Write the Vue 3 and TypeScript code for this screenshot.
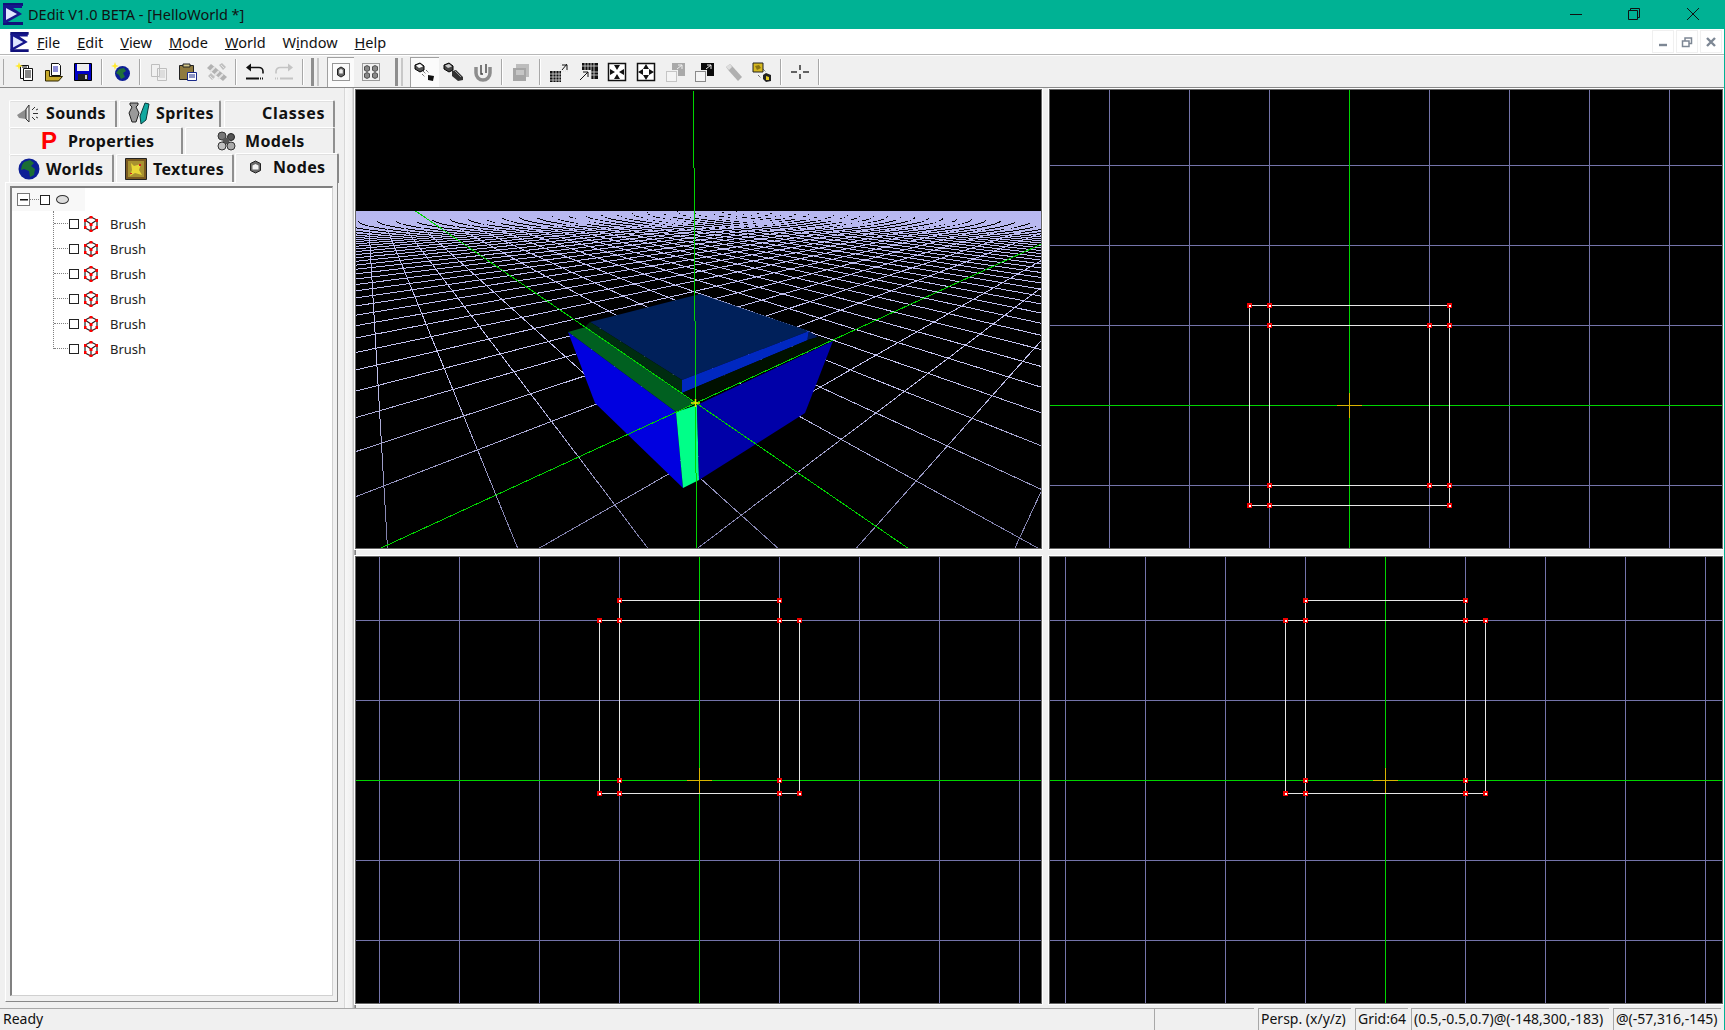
<script setup lang="ts">
interface Pt { x: number, y: number }

// floor grid of the perspective view, fitted from the vanishing points
const VP1: Pt = { x: 366, y: 177 };
const VP2: Pt = { x: 1187, y: 177 };
const ORIGIN: Pt = { x: 696, y: 403 };
const ALPHA = 0.1176;
const BETA = 0.0965;
const W_NEAR = 0.45;
const W_FAR = 6.65;

const project = (a: number, b: number): Pt => {
	const w = a + b + 1;
	return {
		x: (a * VP1.x + b * VP2.x + ORIGIN.x) / w,
		y: (a * VP1.y + b * VP2.y + ORIGIN.y) / w,
	};
};

const segU = (u: number) => {
	const a = u * ALPHA;
	const p = project(a, W_NEAR - 1 - a);
	const q = project(a, W_FAR - 1 - a);
	return `M${p.x.toFixed(1)} ${p.y.toFixed(1)}L${q.x.toFixed(1)} ${q.y.toFixed(1)}`;
};

const segV = (v: number) => {
	const b = v * BETA;
	const p = project(W_NEAR - 1 - b, b);
	const q = project(W_FAR - 1 - b, b);
	return `M${p.x.toFixed(1)} ${p.y.toFixed(1)}L${q.x.toFixed(1)} ${q.y.toFixed(1)}`;
};

let floor = '';
for (let i = -12; i <= 70; i++) {
	if (i === 0) continue;
	floor += segU(i) + segV(i);
}
const floorPath = floor;
const axisPath = segU(0) + segV(0);

// ortho views
interface Ortho {
	key: string,
	view: string,
	x0: number, x1: number, y0: number, y1: number,
	vLines: number[],
	hLines: number[],
	cx: number, cy: number,
	segs: number[][],
	verts: number[][],
}

const stepped = (from: number, to: number, skip: number) => {
	const out: number[] = [];
	for (let i = from; i <= to; i += 80) if (i !== skip) out.push(i);
	return out;
};

const frontBrush = (l: number) => {
	const a = l, b = l + 20, c = l + 180, d = l + 200;
	return {
		segs: [
			[b, 600, c, 600], [a, 620, d, 620], [a, 793, d, 793],
			[a, 620, a, 793], [d, 620, d, 793], [b, 600, b, 793], [c, 600, c, 793],
		],
		verts: [
			[b, 600], [c, 600], [a, 620], [b, 620], [c, 620], [d, 620],
			[b, 780], [c, 780], [a, 793], [b, 793], [c, 793], [d, 793],
		],
	};
};

const ortho: Ortho[] = [
	{
		key: 'top', view: '1050 90 672 458', x0: 1050, x1: 1722, y0: 90, y1: 548,
		vLines: stepped(1109, 1669, 1349), hLines: [165, 245, 325, 485], cx: 1349, cy: 405,
		segs: [
			[1249, 305, 1449, 305], [1269, 325, 1449, 325], [1269, 485, 1449, 485], [1249, 505, 1449, 505],
			[1249, 305, 1249, 505], [1269, 305, 1269, 505], [1429, 325, 1429, 485], [1449, 305, 1449, 505],
		],
		verts: [
			[1249, 305], [1269, 305], [1449, 305], [1269, 325], [1429, 325], [1449, 325],
			[1269, 485], [1429, 485], [1449, 485], [1249, 505], [1269, 505], [1449, 505],
		],
	},
	{
		key: 'left', view: '356 557 685 446', x0: 356, x1: 1041, y0: 557, y1: 1003,
		vLines: stepped(379, 1019, 699), hLines: [620, 700, 860, 940], cx: 699, cy: 780,
		...frontBrush(599),
	},
	{
		key: 'right', view: '1050 557 672 446', x0: 1050, x1: 1722, y0: 557, y1: 1003,
		vLines: stepped(1065, 1705, 1385), hLines: [620, 700, 860, 940], cx: 1385, cy: 780,
		...frontBrush(1285),
	},
];

const brushRows = [0, 1, 2, 3, 4, 5];
</script>

<template>
	<div class="window">
		<div class="titlebar">
			<svg class="logo" width="22" height="24" viewBox="0 0 22 24">
				<path d="M1 1h20v3H1zM1 20h20v3H1z" fill="#10107a" />
				<path d="M1 3h19v3h-9l9 6-16 9H1z" fill="#16168c" />
				<path d="M4 6l11 6-11 6z" fill="#dfe6ff" />
			</svg>
			<span class="title-text">DEdit V1.0 BETA - [HelloWorld *]</span>
			<div class="caption">
				<svg width="14" height="14" viewBox="0 0 14 14" class="cap-min"><path d="M1 7.500h12" stroke="#111" fill="none" /></svg>
				<svg width="14" height="14" viewBox="0 0 14 14" class="cap-max"><path d="M1.500 3.500h9v9h-9zM3.500 3.500v-2h9v9h-2" stroke="#111" fill="none" /></svg>
				<svg width="14" height="14" viewBox="0 0 14 14" class="cap-close"><path d="M1 1l12 12M13 1L1 13" stroke="#111" fill="none" /></svg>
			</div>
		</div>

		<div class="menubar">
			<svg class="menu-logo" width="21" height="22" viewBox="0 0 22 24">
				<path d="M1 1h20v3H1zM1 20h20v3H1z" fill="#10107a" />
				<path d="M1 3h19v3h-9l9 6-16 9H1z" fill="#16168c" />
				<path d="M4 6l11 6-11 6z" fill="#dfe6ff" />
			</svg>
			<span class="menu-item"><u>F</u>ile</span>
			<span class="menu-item"><u>E</u>dit</span>
			<span class="menu-item"><u>V</u>iew</span>
			<span class="menu-item"><u>M</u>ode</span>
			<span class="menu-item"><u>W</u>orld</span>
			<span class="menu-item">W<u>i</u>ndow</span>
			<span class="menu-item"><u>H</u>elp</span>
			<div class="mdi">
				<span class="mdi-btn"><svg width="12" height="12" viewBox="0 0 12 12"><path d="M2 9h8" stroke="#7d8794" stroke-width="2.400" /></svg></span>
				<span class="mdi-btn"><svg width="12" height="12" viewBox="0 0 12 12"><path d="M1.500 5h6.500v5.500H1.500zM4 5V2h6.500v5.500H8" stroke="#7d8794" stroke-width="1.500" fill="none" /></svg></span>
				<span class="mdi-btn"><svg width="12" height="12" viewBox="0 0 12 12"><path d="M2 2l8 8M10 2l-8 8" stroke="#7d8794" stroke-width="2.400" /></svg></span>
			</div>
		</div>

		<div class="toolbar">
			<span class="grip-thin"></span>
			<span class="tb">
				<svg width="20" height="20" viewBox="0 0 20 20">
					<path d="M5.500 3.500h8v13h-8z" fill="#fff" stroke="#111" />
					<path d="M8.500 6.500h9v12h-9z" fill="#fff" stroke="#111" />
					<path d="M10 9h6M10 11h6M10 13h6M10 15h6M7 5h5" stroke="#111" />
					<path d="M4 0l1 3 3 1-3 1-1 3-1-3-3-1 3-1z" fill="#ffe92e" />
				</svg>
			</span>
			<span class="tb">
				<svg width="20" height="20" viewBox="0 0 20 20">
					<path d="M7.500 1.500h7l2 2v10h-9z" fill="#fff" stroke="#111" />
					<path d="M9 5h5M9 7h5M9 9h5" stroke="#1a1ab0" />
					<path d="M1.500 8.500h4v6h13l-4 4.500h-13z" fill="#c6a92c" stroke="#2a2200" />
				</svg>
			</span>
			<span class="tb">
				<svg width="20" height="20" viewBox="0 0 20 20">
					<path d="M1.500 1.500h17v17h-17z" fill="#0000c8" stroke="#000" />
					<path d="M4 2h12v7H4z" fill="#eee" />
					<path d="M5 12h10v6H5z" fill="#222" />
					<path d="M12 13h2v4h-2z" fill="#ccc" />
				</svg>
			</span>
			<span class="sep"></span>
			<span class="tb">
				<svg width="20" height="20" viewBox="0 0 20 20">
					<circle cx="11.500" cy="11.500" r="7.500" fill="#0c1e96" />
					<path d="M8 7l5-1 2 3-3 2 2 4-4 2-2-4-3-2z" fill="#20703a" />
					<path d="M4 0l1 3 3 1-3 1-1 3-1-3-3-1 3-1z" fill="#ffe92e" />
				</svg>
			</span>
			<span class="sep"></span>
			<span class="tb">
				<svg width="20" height="20" viewBox="0 0 20 20" class="dim">
					<path d="M2.500 2.500h8v12h-8zM8.500 6.500h9v12h-9z" fill="#f2f2f2" stroke="#b9b9b9" />
					<path d="M10 9h6M10 11h6M10 13h6M10 15h6" stroke="#c6c6c6" />
				</svg>
			</span>
			<span class="tb">
				<svg width="20" height="20" viewBox="0 0 20 20">
					<path d="M1.500 3.500h14v14h-14z" fill="#8f7a3e" stroke="#222" />
					<path d="M5 2h7v3H5z" fill="#d6c98c" stroke="#222" />
					<path d="M9.500 10.500h9v8h-9z" fill="#fff" stroke="#1a2a8a" />
					<path d="M11 13h6M11 15h6" stroke="#1a2a8a" stroke-width="1.200" />
				</svg>
			</span>
			<span class="tb">
				<svg width="22" height="20" viewBox="0 0 22 20">
					<path d="M1 6l4-4 16 13-4 4z" fill="#b2b2b2" />
					<path d="M4 10l5-5M8 14l5-5M12 17l5-5" stroke="#e4e4e4" stroke-width="2" />
					<path d="M13 3l3-2 4 4-3 3zM2 14l3-3 4 4-3 3z" fill="#c0c0c0" />
					<path d="M15 3l3 3M4 14l3 3" stroke="#e4e4e4" />
				</svg>
			</span>
			<span class="sep"></span>
			<span class="tb">
				<svg width="20" height="20" viewBox="0 0 20 20">
					<path d="M6 5.500h8a4 4 0 0 1 4 4v2" stroke="#111" stroke-width="1.600" fill="none" />
					<path d="M1 5.500l5-4v8z" fill="#111" />
					<path d="M1 16.500h13" stroke="#111" stroke-width="2" />
					<path d="M15 16.500h4" stroke="#111" stroke-width="2" stroke-dasharray="1 1" />
				</svg>
			</span>
			<span class="tb">
				<svg width="20" height="20" viewBox="0 0 20 20">
					<path d="M14 5.500H6a4 4 0 0 0-4 4v2" stroke="#c4c4c4" stroke-width="1.600" fill="none" />
					<path d="M19 5.500l-5-4v8z" fill="#c4c4c4" />
					<path d="M6 16.500h13" stroke="#c4c4c4" stroke-width="2" />
					<path d="M1 16.500h4" stroke="#c4c4c4" stroke-width="2" stroke-dasharray="1 1" />
				</svg>
			</span>
			<span class="sep"></span>
			<span class="grip g1"></span>
			<span class="tb pressed narrow">
				<svg width="20" height="20" viewBox="0 0 20 20">
					<path d="M1.500 1.500h17v17h-17z" fill="none" stroke="#333" stroke-dasharray="1 1" />
					<path d="M10 5l3.500 2v6L10 15l-3.500-2V7z" fill="#666" stroke="#222" />
					<path d="M10 7l1.800 1v3.500H8.200V8z" fill="#eee" />
				</svg>
			</span>
			<span class="tb">
				<svg width="20" height="20" viewBox="0 0 20 20">
					<path d="M1.500 1.500h17v17h-17z" fill="none" stroke="#444" stroke-dasharray="1 1" />
					<path d="M6 3.500l2.500 1.200v3.600L6 9.500 3.500 8.300V4.700zM14 3.500l2.500 1.200v3.600L14 9.500l-2.500-1.200V4.700zM6 10.500l2.500 1.200v3.600L6 16.500l-2.500-1.200v-3.600zM14 10.500l2.500 1.200v3.600L14 16.500l-2.500-1.200v-3.600z" fill="#888" stroke="#222" stroke-width=".7" />
				</svg>
			</span>
			<span class="grip g2"></span>
			<span class="tb pressed">
				<svg width="22" height="20" viewBox="0 0 22 20">
					<path d="M1 3l5-2 4 3v4l-4 2-5-3z" fill="#555" stroke="#000" />
					<path d="M2 3.500l4-1.500 3 2.500L5 6z" fill="#fff" />
					<path d="M9 9l3 3M12 8l3 3M8 12l3 3" stroke="#333" stroke-dasharray="1 1" />
					<path d="M14 13l6 1-1 5-5-1z" fill="#111" />
				</svg>
			</span>
			<span class="tb">
				<svg width="22" height="20" viewBox="0 0 22 20">
					<path d="M1 3l5-2 4 3v4l-4 2-5-3z" fill="#444" stroke="#000" />
					<path d="M2 3.500l4-1.500 3 2.500L5 6z" fill="#ccc" />
					<path d="M9 9l4-1 7 7v3l-5 1-6-5z" fill="#333" />
					<path d="M12 9l6 6" stroke="#999" />
				</svg>
			</span>
			<span class="tb">
				<svg width="20" height="20" viewBox="0 0 20 20">
					<path d="M3 5v6a7 7 0 0 0 14 0V5" fill="none" stroke="#8d8d8d" stroke-width="3.500" />
					<path d="M8 3v9h2M13 2v9" stroke="#444" stroke-width="1.400" fill="none" />
				</svg>
			</span>
			<span class="sep"></span>
			<span class="tb">
				<svg width="20" height="20" viewBox="0 0 20 20">
					<path d="M5 2h13v13H5z" fill="#bdbdbd" />
					<path d="M2 6h13v13H2z" fill="#a6a6a6" />
					<path d="M5 8h8v5H5z" fill="#c6c6c6" />
				</svg>
			</span>
			<span class="sep"></span>
			<span class="tb">
				<svg width="20" height="20" viewBox="0 0 20 20">
					<path d="M1 9h11v11H1z" fill="#111" />
					<path d="M4 9v11M7 9v11M10 9v11M1 12h11M1 15h11M1 18h11" stroke="#ddd" stroke-width=".8" />
					<path d="M13 3h5v5M18 2l-5 6" fill="none" stroke="#111" />
					<path d="M12 1v8h8" fill="none" stroke="#ddd" stroke-dasharray="1 1" />
				</svg>
			</span>
			<span class="tb">
				<svg width="20" height="20" viewBox="0 0 20 20">
					<path d="M4 1h16v16h-7V8H4z" fill="#111" />
					<path d="M7 1v7M10 1v7M13 1v16M16 1v16M4 4h16M13 10h7M13 13h7" stroke="#ddd" stroke-width=".8" />
					<path d="M2 18l8-8M5 10h5v5" fill="none" stroke="#111" />
				</svg>
			</span>
			<span class="tb">
				<svg width="20" height="20" viewBox="0 0 20 20">
					<path d="M1.500 1.500h17v17h-17z" fill="#fff" stroke="#111" stroke-width="1.500" />
					<path d="M10 8l-3-5h6zM10 12l-3 5h6zM8 10L3 7v6zM12 10l5-3v6z" fill="#111" />
				</svg>
			</span>
			<span class="tb">
				<svg width="20" height="20" viewBox="0 0 20 20">
					<path d="M1.500 1.500h17v17h-17z" fill="#fff" stroke="#111" stroke-width="1.500" />
					<path d="M10 2l-3 5h6zM10 18l-3-5h6zM2 10l5-3v6zM18 10l-5-3v6z" fill="#111" />
				</svg>
			</span>
			<span class="tb">
				<svg width="20" height="20" viewBox="0 0 20 20">
					<path d="M7 1h13v13h-7V8H7z" fill="#a9a9a9" />
					<path d="M12 7l5-4M13 3h4v4" fill="none" stroke="#eee" />
					<path d="M1.500 9.500h10v10h-10z" fill="#f4f4f4" stroke="#999" stroke-dasharray="1 1" />
				</svg>
			</span>
			<span class="tb">
				<svg width="20" height="20" viewBox="0 0 20 20">
					<path d="M7 1h13v13h-7V8H7z" fill="#0a0a0a" />
					<path d="M12 7l5-4M13 3h4v4" fill="none" stroke="#eee" />
					<path d="M1.500 9.500h10v10h-10z" fill="#f4f4f4" stroke="#222" stroke-dasharray="1 1" />
				</svg>
			</span>
			<span class="tb">
				<svg width="20" height="20" viewBox="0 0 20 20">
					<path d="M3 5l4-3 3 3 9 10-4 4L6 9z" fill="#b0b0b0" />
					<path d="M3 5l4-3 2 3-3 3z" fill="#dedede" />
				</svg>
			</span>
			<span class="tb">
				<svg width="20" height="20" viewBox="0 0 20 20">
					<path d="M1 1h10v9H1z" fill="#d6b820" stroke="#222" />
					<path d="M3 4l4-1 2 3-4 2z" fill="#8a7410" />
					<path d="M11 7l3 3M6 13l3 3" stroke="#333" stroke-dasharray="1 1" />
					<path d="M14 11l5 2v6l-5 1-3-3v-4z" fill="#222" />
					<path d="M14 14l3 1v3h-3z" fill="#e6cc20" />
				</svg>
			</span>
			<span class="sep"></span>
			<span class="tb">
				<svg width="20" height="20" viewBox="0 0 20 20">
					<path d="M1 10h6M13 10h6M10 3v5M10 12v5" stroke="#333" stroke-width="1.500" />
				</svg>
			</span>
			<span class="sep"></span>
		</div>

		<div class="main">
			<div class="side">
				<div class="tab-row r1">
					<div class="tab t-sounds">
						<svg width="24" height="20" viewBox="0 0 24 20">
							<path d="M0 11l9-6 3-4v17l-3-3-7-1z" fill="#8e8e8e" />
							<path d="M9 5l3-4v17l-3-3z" fill="#e8e8e8" stroke="#333" />
							<path d="M15 6l3-3M16 9.500h5M15 13l3 3M19 6l2-1M19 13l2 1" stroke="#333" />
						</svg>
						<span>Sounds</span>
					</div>
					<div class="tab t-sprites">
						<svg width="24" height="24" viewBox="0 0 24 24">
							<path d="M3 1h8v2L9 5l3 6-3 9H5L2 11l3-6-2-2z" fill="#9a9a9a" stroke="#222" />
							<path d="M18 1l4 1-3 16-5 4-1-8z" fill="#10a8a0" stroke="#083838" />
						</svg>
						<span>Sprites</span>
					</div>
					<div class="tab t-classes"><span>Classes</span></div>
				</div>
				<div class="tab-row r2">
					<div class="tab t-props"><span class="big-p">P</span><span>Properties</span></div>
					<div class="tab t-models">
						<svg width="21" height="20" viewBox="0 0 21 20">
							<circle cx="6" cy="5" r="4" fill="#777" stroke="#333" />
							<circle cx="15" cy="6" r="3.500" fill="#555" stroke="#222" />
							<circle cx="10" cy="10" r="3.500" fill="#555" />
							<circle cx="6" cy="15" r="4" fill="#c0c0c0" stroke="#333" />
							<circle cx="15" cy="15" r="4" fill="#aaa" stroke="#333" />
						</svg>
						<span>Models</span>
					</div>
				</div>
				<div class="tab-row r3">
					<div class="tab t-worlds">
						<svg width="22" height="22" viewBox="0 0 22 22">
							<circle cx="11" cy="11" r="10.500" fill="#0c1e96" />
							<path d="M6 4l6-2 4 3-3 3 4 3-1 6-4 2-1-6-5-2-3 1 1-5z" fill="#1b6e34" />
						</svg>
						<span>Worlds</span>
					</div>
					<div class="tab t-textures">
						<svg width="22" height="22" viewBox="0 0 22 22">
							<path d="M.5.500h21v21H.500z" fill="#7a5a20" stroke="#222" />
							<path d="M3 3h16v16H3z" fill="#a89230" />
							<path d="M6 5l3 3 7-2-2 6 3 5-7-2-5 3 2-6z" fill="#e8d836" />
							<path d="M14 6h2v2h-2zM5 15h2v1H5z" fill="#d02020" />
						</svg>
						<span>Textures</span>
					</div>
					<div class="tab t-nodes active">
						<svg width="13" height="14" viewBox="0 0 13 14">
							<path d="M6.500 1l5 2.500v7L6.500 13l-5-2.500v-7z" fill="#6a6a6a" stroke="#222" />
							<path d="M6.500 4l3 1.500v4H3.500v-4z" fill="#f4f4f4" />
						</svg>
						<span>Nodes</span>
					</div>
				</div>
				<div class="tab-page">
					<div class="tree">
						<div class="tree-root">
							<span class="expander"></span>
							<span class="dots short"></span>
							<span class="check"></span>
							<span class="oval"></span>
						</div>
						<div class="tree-children">
							<div v-for="n in brushRows" :key="n" class="tree-row">
								<span class="dots"></span>
								<span class="check"></span>
								<svg class="cube" width="14" height="16" viewBox="0 0 14 16">
									<path d="M7 1l6 3v8l-6 3-6-3V4z" fill="#fff" stroke="#222" stroke-width="1.200" />
									<path d="M7 8L1 4M7 8l6-4M7 8v7" stroke="#222" stroke-width="1.200" />
									<path d="M5.500 0h3v2.500h-3zM0 3h2.500v3H0zM11.500 3H14v3h-2.500zM0 10h2.500v3H0zM11.500 10H14v3h-2.500zM5.500 13.500h3V16h-3zM5.500 7h3v3h-3z" fill="#f00" />
								</svg>
								<span class="node-label">Brush</span>
							</div>
						</div>
					</div>
				</div>
			</div>

			<div class="side-bar"></div>

			<div class="views">
				<div class="view">
					<svg class="view-svg" width="685" height="458" viewBox="356 90 685 458">
						<defs>
							<linearGradient id="floorFade" gradientUnits="userSpaceOnUse" x1="0" y1="211" x2="0" y2="548">
								<stop offset="0" stop-color="#b8b8f0" />
								<stop offset="0.45" stop-color="#c4c4ee" />
								<stop offset="1" stop-color="#7c7ca8" />
							</linearGradient>
						</defs>
						<path :d="floorPath" fill="none" stroke="url(#floorFade)" stroke-width="1" shape-rendering="crispEdges" />
						<polygon points="590,322 700,294 809,331 682,380" fill="#00205a" />
						<polygon points="590,322 682,380 682,393 585,327" fill="#002c10" />
						<polygon points="682,380 809,331 808,340 682,393" fill="#0028c0" />
						<polygon points="809,331 818,337 807,340" fill="#001a5c" />
						<polygon points="682,393 808,340 818,337 833,341 695,403" fill="#001000" />
						<polygon points="568,332 586,327 695,403 676,412" fill="#006020" />
						<polygon points="568,332 676,412 683,488 595,403" fill="#0000e0" />
						<polygon points="676,412 697,405 699,480 683,488" fill="#00ff88" />
						<polygon points="697,405 833,341 805,413 699,480" fill="#0000a8" />
						<path :d="axisPath" fill="none" stroke="#00d400" stroke-width="1" shape-rendering="crispEdges" />
						<path d="M693.500 91L696.500 548" fill="none" stroke="#00d400" stroke-width="1" shape-rendering="crispEdges" />
						<path d="M691 403h9M695.500 399v8" stroke="#e8e800" stroke-width="1.500" />
					</svg>
				</div>
				<div v-for="v in ortho" :key="v.key" class="view">
					<svg class="view-svg" :width="v.x1 - v.x0" :height="v.y1 - v.y0" :viewBox="v.view" shape-rendering="crispEdges">
						<line v-for="x in v.vLines" :key="'v' + x" :x1="x + 0.5" :x2="x + 0.5" :y1="v.y0" :y2="v.y1" class="grid-line" />
						<line v-for="y in v.hLines" :key="'h' + y" :y1="y + 0.5" :y2="y + 0.5" :x1="v.x0" :x2="v.x1" class="grid-line" />
						<line :x1="v.cx + 0.5" :x2="v.cx + 0.5" :y1="v.y0" :y2="v.y1" class="axis-line" />
						<line :y1="v.cy + 0.5" :y2="v.cy + 0.5" :x1="v.x0" :x2="v.x1" class="axis-line" />
						<line :x1="v.cx - 12" :x2="v.cx + 13" :y1="v.cy + 0.5" :y2="v.cy + 0.5" class="cross-line" />
						<line :x1="v.cx + 0.5" :x2="v.cx + 0.5" :y1="v.cy - 12" :y2="v.cy + 13" class="cross-line" />
						<line v-for="(s, i) in v.segs" :key="'s' + i" :x1="s[0] + 0.5" :y1="s[1] + 0.5" :x2="s[2] + 0.5" :y2="s[3] + 0.5" class="brush-line" />
						<g v-for="(p, i) in v.verts" :key="'p' + i">
							<rect :x="p[0] - 2" :y="p[1] - 2" width="5" height="5" fill="#f00000" />
							<rect :x="p[0] - 0" :y="p[1] - 0" width="2" height="2" fill="#fff" />
						</g>
					</svg>
				</div>
			</div>
		</div>

		<div class="statusbar">
			<span class="ready">Ready</span>
			<span class="pane p0"></span>
			<span class="pane p1">Persp. (x/y/z)</span>
			<span class="pane p2">Grid:64</span>
			<span class="pane p3">(0.5,-0.5,0.7)@(-148,300,-183)</span>
			<span class="pane p4">@(-57,316,-145)</span>
		</div>
	</div>
</template>

<style>
html, body {
	margin: 0;
	overflow: hidden;
	background: #f0f0f0;
}
</style>

<style scoped>
.window {
	width: 1725px;
	height: 1030px;
	box-sizing: border-box;
	border-right: 1px solid #00b294;
	display: flex;
	flex-direction: column;
	background: #f0f0f0;
	font-family: "Noto Sans", "Liberation Sans", sans-serif;
	color: #111;
	overflow: hidden;
}

.titlebar {
	height: 29px;
	flex: none;
	background: #00b294;
	display: flex;
	align-items: center;
	padding-left: 2px;
	font-size: 14.5px;
	padding-bottom: 1px;
	box-sizing: border-box;
}

.logo {
	margin-right: 4px;
}

.caption {
	margin-left: auto;
	display: flex;
}

.cap-min {
	margin-right: 44px;
}

.cap-max {
	margin-right: 45px;
}

.cap-close {
	margin-right: 24px;
}

.menubar {
	height: 26px;
	flex: none;
	box-sizing: border-box;
	background: #fff;
	border-bottom: 1px solid #b8b8b8;
	display: flex;
	align-items: center;
	font-size: 14.5px;
	padding-left: 9px;
}

.menu-logo {
	margin-right: 7px;
}

.menu-item {
	margin-right: 17px;
}

.mdi {
	margin-left: auto;
	display: flex;
	gap: 2px;
	margin-right: 2px;
}

.mdi-btn {
	width: 20px;
	height: 21px;
	border: 1px solid #f0f0f0;
	display: flex;
	align-items: center;
	justify-content: center;
}

.toolbar {
	height: 33px;
	flex: none;
	display: flex;
	align-items: center;
	background: #f0f0f0;
	border-top: 1px solid #fff;
	border-bottom: 1px solid #8a8a8a;
	box-sizing: border-box;
}

.grip-thin {
	width: 1px;
	height: 26px;
	margin: 0 6px 0 3px;
	background: #a8a8a8;
}

.tb {
	width: 29px;
	height: 30px;
	flex: none;
	box-sizing: border-box;
	display: flex;
	align-items: center;
	justify-content: center;
}

.tb.narrow {
	width: 27px;
	margin-right: 2px;
}

.tb.pressed {
	background: #fbfbfb;
	border-top: 1px solid #a0a0a0;
	border-left: 1px solid #a0a0a0;
}

.dim {
	opacity: 0.9;
}

.sep {
	width: 1px;
	height: 26px;
	flex: none;
	background: #a8a8a8;
	border-right: 1px solid #fff;
	margin: 0 3px 0 4px;
}

.grip {
	width: 3px;
	height: 28px;
	flex: none;
	border-left: 3px solid #8e8e8e;
	border-right: 2px solid #c8c8c8;
}

.grip.g1 {
	margin: 0 8px 0 4px;
}

.grip.g2 {
	margin: 0 7px 0 10px;
}

.main {
	flex: 1;
	min-height: 0;
	display: flex;
	background: #f0f0f0;
}

.side {
	width: 345px;
	flex: none;
	padding-top: 12px;
	box-sizing: border-box;
	border-right: 1px solid #d8d8d8;
	display: flex;
	flex-direction: column;
	font-size: 16px;
}

.tab-row {
	display: flex;
	margin-left: 9px;
	width: 326px;
	height: 27px;
	font-weight: 700;
	letter-spacing: 0.35px;
}

.tab-row.r1 span {
	position: relative;
	top: -1px;
}

.tab-row.r3 {
	height: 28px;
	position: relative;
}

.tab {
	box-sizing: border-box;
	border-top: 1px solid #fff;
	border-left: 1px solid #fff;
	border-right: 2px solid #909090;
	border-radius: 2px 2px 0 0;
	display: flex;
	align-items: center;
	gap: 5px;
	flex: none;
	background: #f0f0f0;
	height: 100%;
	box-shadow: inset 0 1px 0 #e0e0e0;
}

.t-sounds {
	width: 108px;
	padding-left: 7px;
	margin-right: 2px;
}

.t-sprites {
	width: 102px;
	padding-left: 7px;
	margin-right: 3px;
}

.t-classes {
	width: 111px;
	padding-left: 37px;
	letter-spacing: 0.7px;
}

.t-props {
	width: 174px;
	padding-left: 31px;
	margin-right: 2px;
	gap: 11px;
}

.big-p {
	color: #f00;
	font-family: "Liberation Sans", sans-serif;
	font-size: 24px;
	letter-spacing: 0;
}

.t-models {
	width: 150px;
	padding-left: 30px;
	gap: 8px;
}

.t-worlds {
	width: 105px;
	padding-left: 8px;
	gap: 6px;
	margin-right: 2px;
}

.t-textures {
	width: 118px;
	padding-left: 8px;
	gap: 6px;
	margin-right: 1px;
}

.t-nodes {
	width: 104px;
	padding-left: 13px;
	gap: 11px;
	padding-bottom: 3px;
}

.tab.active {
	height: 30px;
	margin-top: -1px;
	position: relative;
	z-index: 2;
	border-right-color: #888;
}

.tab-page {
	margin: 0 0 0 5px;
	width: 333px;
	height: 820px;
	box-sizing: border-box;
	padding: 3px 4px 5px;
	border-top: 1px solid #fff;
	border-left: 1px solid #fff;
	border-right: 1px solid #888;
	border-bottom: 1px solid #888;
	background: #f0f0f0;
}

.tree {
	height: 100%;
	box-sizing: border-box;
	background: #fff;
	border-top: 2px solid #808080;
	border-left: 2px solid #808080;
	border-right: 1px solid #d0d0d0;
	border-bottom: 1px solid #d0d0d0;
	font-weight: 400;
	letter-spacing: 0;
	font-size: 13px;
}

.tree-root {
	width: 68px;
	height: 23px;
	padding-left: 5px;
	display: flex;
	align-items: center;
	background: #f8f8f8;
}

.expander {
	width: 13px;
	height: 13px;
	box-sizing: border-box;
	border: 1px solid #777;
	background: linear-gradient(#111, #111) center / 8px 1.5px no-repeat #fff;
	flex: none;
}

.dots {
	width: 14px;
	height: 0;
	border-top: 1px dotted #808080;
	flex: none;
	margin-right: 1px;
}

.dots.short {
	width: 9px;
}

.check {
	width: 10px;
	height: 10px;
	box-sizing: border-box;
	border: 1.5px solid #222;
	flex: none;
	background: #fff;
}

.oval {
	width: 13px;
	height: 9px;
	border: 1.5px solid #333;
	border-radius: 50%;
	box-sizing: border-box;
	background: #ddd;
	margin-left: 6px;
}

.tree-children {
	margin-left: 41px;
	border-left: 1px dotted #808080;
}

.tree-row {
	height: 25px;
	display: flex;
	align-items: center;
	position: relative;
}

.tree-row:last-child::after {
	content: "";
	position: absolute;
	left: -1px;
	top: 13px;
	width: 1px;
	height: 12px;
	background: #fff;
}

.cube {
	margin-left: 5px;
	flex: none;
}

.node-label {
	margin-left: 12px;
	color: #222;
}

.side-bar {
	width: 11px;
	flex: none;
	background: linear-gradient(90deg, #f8f8f8, #f0f0f0 60%, #9a9a9a 92%, #606060);
}

.views {
	flex: none;
	width: 1366px;
	padding-top: 2px;
	box-sizing: border-box;
	display: grid;
	grid-template-columns: 685px 672px;
	grid-template-rows: 458px 446px;
	column-gap: 9px;
	row-gap: 9px;
}

.view {
	background: #000;
	overflow: hidden;
	outline: 1px solid #666;
	box-shadow: 0 0 0 2px #fff;
}

.view-svg {
	display: block;
}

.grid-line {
	stroke: #7474aa;
	stroke-width: 1;
}

.axis-line {
	stroke: #00d400;
	stroke-width: 1;
}

.cross-line {
	stroke: #d8b400;
	stroke-width: 1;
}

.brush-line {
	stroke: #e6e6e6;
	stroke-width: 1;
}

.statusbar {
	height: 22px;
	flex: none;
	display: flex;
	align-items: stretch;
	font-size: 14px;
	line-height: 20px;
	box-sizing: border-box;
}

.ready {
	width: 1154px;
	flex: none;
	padding-left: 3px;
	box-sizing: border-box;
	border-top: 1px solid #a8a8a8;
}

.pane {
	flex: none;
	box-sizing: border-box;
	border-top: 1px solid #a8a8a8;
	border-left: 1px solid #a8a8a8;
	padding-left: 2px;
	white-space: nowrap;
	overflow: hidden;
}

.p0 {
	width: 100px;
	margin-right: 4px;
}

.p1 {
	width: 93px;
	margin-right: 4px;
}

.p2 {
	width: 53px;
	margin-right: 3px;
}

.p3 {
	width: 198px;
	margin-right: 4px;
}

.p4 {
	width: 108px;
}
</style>
